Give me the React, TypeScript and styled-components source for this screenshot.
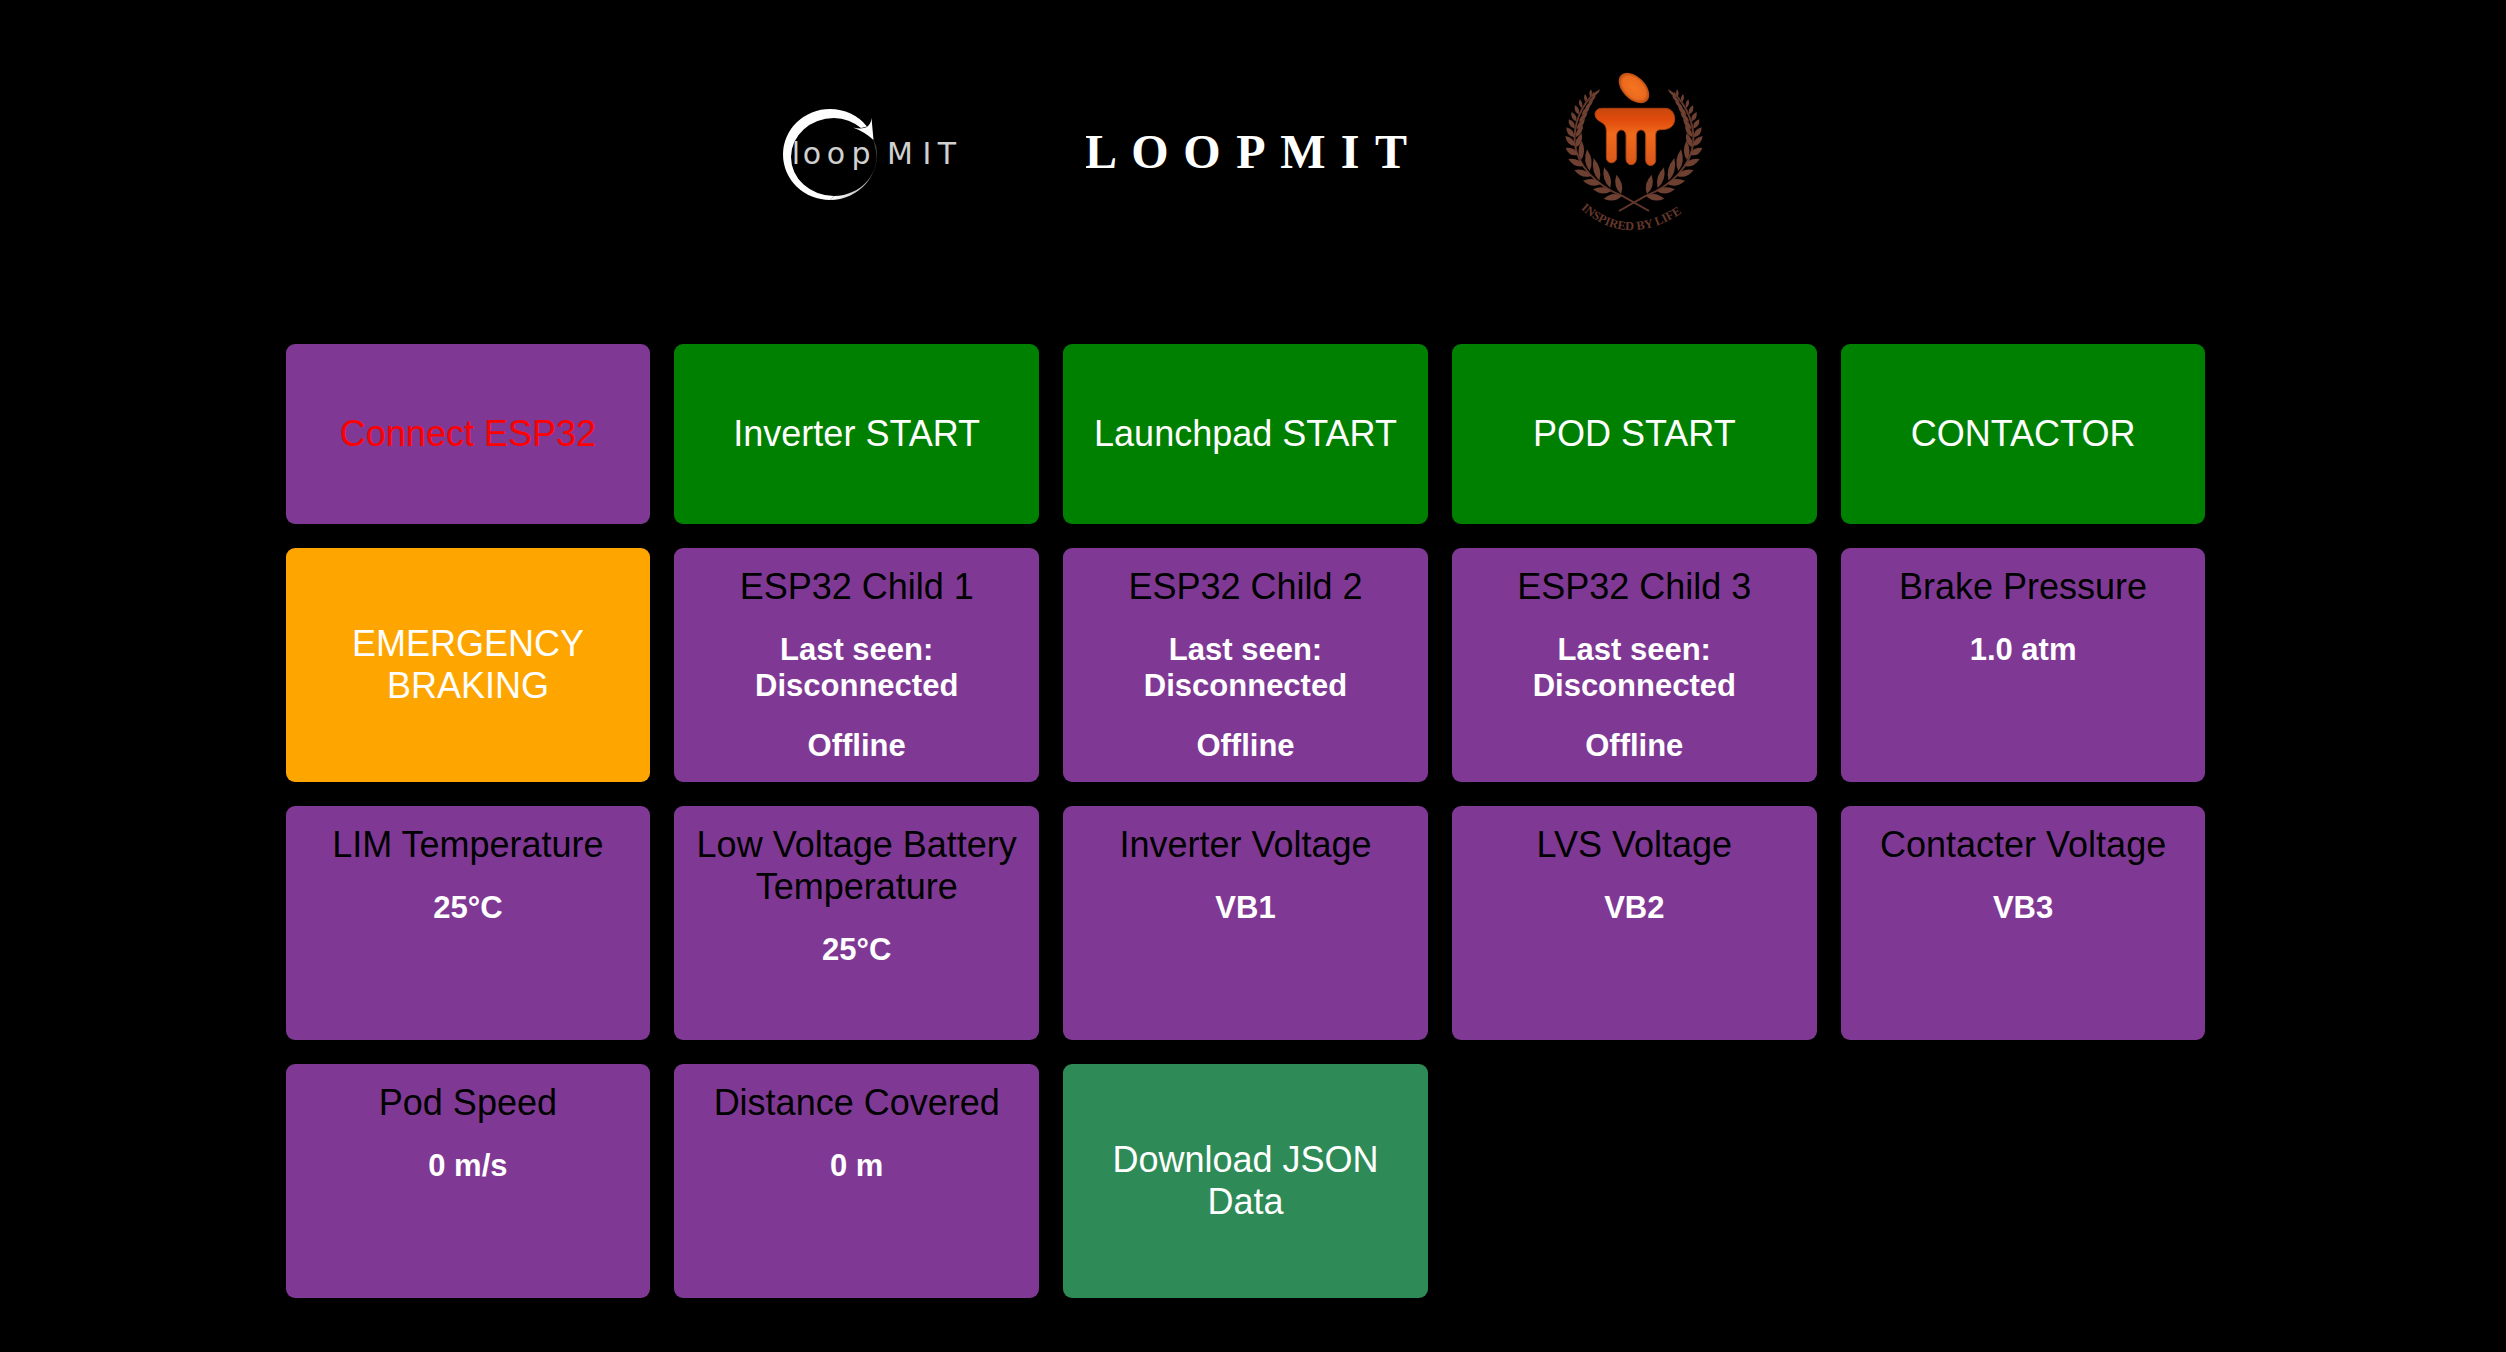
import React from "react";
import styled, { createGlobalStyle } from "styled-components";

const GlobalStyle = createGlobalStyle`
  * {
    box-sizing: border-box;
  }
  body {
    margin: 0;
    background: #000;
    font-family: "Liberation Sans", Arial, sans-serif;
  }
`;

const Page = styled.div`
  min-height: 100vh;
  padding: 60px 15px 54px 0;
  background: #000;
`;

const Header = styled.header`
  display: flex;
  flex-wrap: wrap;
  align-items: center;
  justify-content: center;
  gap: 105px;
  margin-bottom: 94px;
`;

const Logo = styled.svg`
  display: block;
  flex: none;
`;

const WordmarkHeading = styled.h1`
  margin: 0;
`;

const Grid = styled.main`
  display: grid;
  grid-template-columns: repeat(5, minmax(0, 1fr));
  grid-template-rows: minmax(180px, auto);
  grid-auto-rows: 1fr;
  gap: 24px;
  max-width: 1920px;
  margin: 0 auto;
`;

const ActionButton = styled.button<{ $background: string; $color?: string }>`
  padding: 18px;
  border: 0;
  border-radius: 9px;
  background: ${(p) => p.$background};
  color: ${(p) => p.$color ?? "#fff"};
  font-family: inherit;
  font-size: 36px;
  line-height: 42px;
  text-align: center;
  cursor: pointer;
`;

const Card = styled.section`
  display: flex;
  flex-direction: column;
  gap: 24px;
  padding: 18px;
  border-radius: 9px;
  background: #7f3995;
  text-align: center;
`;

const CardTitle = styled.h2`
  margin: 0;
  color: #000;
  font-size: 36px;
  font-weight: 400;
  line-height: 42px;
`;

const CardValue = styled.p`
  margin: 0;
  color: #fff;
  font-size: 31px;
  font-weight: 700;
  line-height: 36px;
`;

function LoopLogo() {
  return (
    <Logo width="220" height="130" viewBox="0 0 220 130" role="img" aria-label="loopMIT">
      <defs>
        <linearGradient id="tail" gradientUnits="userSpaceOnUse" x1="70" y1="108" x2="116" y2="66">
          <stop offset="0" stopColor="#fff" />
          <stop offset="0.6" stopColor="#aaa" />
          <stop offset="1" stopColor="#444" />
        </linearGradient>
      </defs>
      <path
        fill="#fff"
        d="M106 36.500A47 45.500 0 0 0 69 19A47 45.500 0 0 0 22 64.500A47 45.500 0 0 0 69 110L73 106A43 39 0 0 1 30 67A43 39 0 0 1 73 28A43 39 0 0 1 100 38Z"
      />
      <path
        fill="url(#tail)"
        d="M69 110A47 45.500 0 0 0 115.300 56.700L112.500 49L114 57A43 39 0 0 1 73 106Z"
      />
      <path fill="#fff" d="M92 37.500Q101 39.500 106 37Q110 34 110.500 28L112.500 50Q104 42 92 37.500Z" />
      <g
        fill="#d0d0d0"
        fontFamily='"DejaVu Sans", sans-serif'
        fontSize="30"
        textAnchor="middle"
      >
        <text y="74" x="35 51 75 100">loop</text>
        <text y="74" x="139 166 186">MIT</text>
      </g>
    </Logo>
  );
}

function Wordmark() {
  return (
    <WordmarkHeading>
      <Logo width="350" height="90" viewBox="0 0 350 90" role="img" aria-label="LOOPMIT">
        <text
          y="58"
          x="15 64 116 165 217 264 305"
          fill="#fff"
          fontFamily='"Liberation Serif", serif'
          fontSize="48"
          fontWeight="700"
          textAnchor="middle"
        >
          LOOPMIT
        </text>
      </Logo>
    </WordmarkHeading>
  );
}

/* Each leaf: x and y at the stem, x and y at the tip, half width. */
const leaves = [
  [242, 408, 188, 416, 19],
  [210, 394, 156, 388, 19],
  [180, 372, 126, 362, 19],
  [150, 348, 100, 330, 19],
  [128, 318, 82, 297, 18],
  [110, 285, 74, 264, 18],
  [102, 258, 73, 228, 17],
  [99, 232, 76, 202, 16],
  [101, 206, 83, 178, 14],
  [106, 184, 91, 156, 13],
  [113, 163, 102, 136, 12],
  [122, 144, 116, 118, 10],
  [135, 126, 132, 102, 9],
  [148, 110, 150, 88, 8],
  [240, 402, 226, 344, 19],
  [208, 384, 189, 322, 19],
  [175, 362, 158, 294, 19],
  [146, 333, 138, 268, 19],
  [120, 300, 122, 242, 17],
  [106, 262, 122, 220, 16],
  [104, 232, 126, 196, 14],
  [107, 208, 132, 176, 13],
  [114, 186, 140, 157, 12],
  [122, 166, 147, 138, 12],
  [132, 147, 156, 122, 10],
  [142, 130, 165, 106, 9],
  [152, 112, 178, 88, 8],
];

function leafPath([bx, by, tx, ty, w]: number[]) {
  const dx = tx - bx;
  const dy = ty - by;
  const length = Math.hypot(dx, dy);
  const nx = (-dy / length) * w;
  const ny = (dx / length) * w;
  const mx = bx + dx * 0.45;
  const my = by + dy * 0.45;
  return `M${bx} ${by}Q${mx + nx} ${my + ny} ${tx} ${ty}Q${mx - nx} ${my - ny} ${bx} ${by}Z`;
}

function Branch() {
  return (
    <>
      <path
        d="M160 98C118 142 98 196 101 248C108 318 166 376 244 408L324 453"
        fill="none"
        stroke="#63372a"
        strokeWidth="6"
      />
      {leaves.map((leaf, i) => (
        <path key={i} d={leafPath(leaf)} fill="#6e4032" />
      ))}
    </>
  );
}

function CrestLogo() {
  return (
    <Logo width="190" height="190" viewBox="0 0 570 570" role="img" aria-label="Inspired by life">
      <defs>
        <radialGradient id="head">
          <stop offset="0" stopColor="#f57420" />
          <stop offset="0.75" stopColor="#ec6a1e" />
          <stop offset="1" stopColor="#b34a12" />
        </radialGradient>
        <linearGradient id="body" x1="0" y1="0" x2="0" y2="1">
          <stop offset="0" stopColor="#c9470d" />
          <stop offset="0.2" stopColor="#e04b0c" />
          <stop offset="0.45" stopColor="#f06a1c" />
          <stop offset="1" stopColor="#d9571a" />
        </linearGradient>
        <path id="motto" d="M119 446Q264 576 444 444" />
      </defs>
      <Branch />
      <g transform="translate(558 0) scale(-1 1)">
        <Branch />
      </g>
      <ellipse cx="279" cy="84" rx="55" ry="34" transform="rotate(45 279 84)" fill="url(#head)" />
      <path
        fill="url(#body)"
        stroke="#a8400f"
        strokeWidth="3"
        d="M182 145H374C392 146 402 162 401 180C399 200 384 209 362 209C348 209 344 214 344 228V300C344 322 314 322 314 300V228C314 204 286 204 286 228V296C286 320 255 320 255 296V228C255 204 227 204 227 228V292C227 314 196 314 196 292V212C196 198 190 192 180 186C154 174 158 146 182 145Z"
      />
      <text fill="#64382b" fontFamily='"Liberation Serif", serif' fontSize="37" fontWeight="700">
        <textPath href="#motto">INSPIRED BY LIFE</textPath>
      </text>
    </Logo>
  );
}

const readings: { title: string; values: string[] }[] = [
  { title: "ESP32 Child 1", values: ["Last seen: Disconnected", "Offline"] },
  { title: "ESP32 Child 2", values: ["Last seen: Disconnected", "Offline"] },
  { title: "ESP32 Child 3", values: ["Last seen: Disconnected", "Offline"] },
  { title: "Brake Pressure", values: ["1.0 atm"] },
  { title: "LIM Temperature", values: ["25°C"] },
  { title: "Low Voltage Battery Temperature", values: ["25°C"] },
  { title: "Inverter Voltage", values: ["VB1"] },
  { title: "LVS Voltage", values: ["VB2"] },
  { title: "Contacter Voltage", values: ["VB3"] },
  { title: "Pod Speed", values: ["0 m/s"] },
  { title: "Distance Covered", values: ["0 m"] },
];

const starters = ["Inverter START", "Launchpad START", "POD START", "CONTACTOR"];

export default function App() {
  return (
    <Page>
      <GlobalStyle />
      <Header>
        <LoopLogo />
        <Wordmark />
        <CrestLogo />
      </Header>
      <Grid>
        <ActionButton $background="#7f3995" $color="#f00">
          Connect ESP32
        </ActionButton>
        {starters.map((label) => (
          <ActionButton key={label} $background="#008000">
            {label}
          </ActionButton>
        ))}
        <ActionButton $background="#ffa500">EMERGENCY BRAKING</ActionButton>
        {readings.map(({ title, values }) => (
          <Card key={title}>
            <CardTitle>{title}</CardTitle>
            {values.map((value) => (
              <CardValue key={value}>{value}</CardValue>
            ))}
          </Card>
        ))}
        <ActionButton $background="#2e8b57">Download JSON Data</ActionButton>
      </Grid>
    </Page>
  );
}
